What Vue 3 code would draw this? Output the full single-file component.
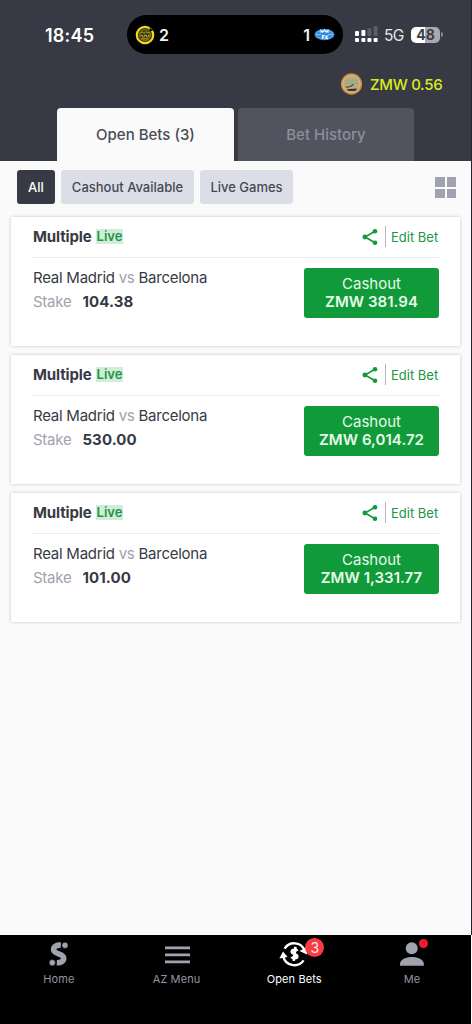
<script setup>
const bets = [
  { stake: '104.38', cashout: '381.94' },
  { stake: '530.00', cashout: '6,014.72' },
  { stake: '101.00', cashout: '1,331.77' },
]
</script>

<template>
  <div class="screen">
    <header class="header">
      <div class="status">
        <span class="time">18:45</span>
        <div class="island">
          <svg class="club" viewBox="0 0 20 20">
            <circle cx="10" cy="10" r="8.2" fill="#39360d" stroke="#f0dc16" stroke-width="2.2" />
            <circle cx="10" cy="10" r="5.4" fill="none" stroke="#8d7b32" stroke-width="1" />
            <path d="M5 8.2l2-1.4 2 1.4 2-1.6 2 1.5 2-1.3M5.2 10.3h2.3v1.6h2v-1.8h2v1.8h2v-1.6h2M6 13.8h7.4" fill="none" stroke="#b9a62c" stroke-width="1" />
            <path d="M14.8 2.4l3 3.2-3.2 1.2z" fill="#000" />
          </svg>
          <b>2</b>
          <b class="away">1</b>
          <svg class="oval" viewBox="0 0 21 13">
            <ellipse cx="10.5" cy="6.5" rx="10" ry="5.8" fill="#3488d8" />
            <ellipse cx="10.5" cy="6.5" rx="8.3" ry="4.3" fill="none" stroke="#8fc4ee" stroke-width=".7" />
            <path d="M7 4.8V2.4l1.8 1.8 1.7-2 1.7 2L14 2.4v2.4M8.5 11V7.6h2.2M8.5 9.2h1.8M11.9 7.6V11m2-3.4l-1.7 1.6 1.7 1.8" fill="none" stroke="#eef8ff" stroke-width="1.1" />
            <path d="M3 6.6h4M14 6.6h4" stroke="#b8dbf5" stroke-width=".8" />
          </svg>
        </div>
        <svg class="signal" viewBox="0 0 23 17">
          <g fill="#fff">
            <rect x="0" y="5" width="4" height="5" rx="1" /><rect x="6.4" y="4" width="4" height="6" rx="1" />
            <rect x="0" y="12" width="4" height="4" rx="1" /><rect x="6.4" y="12" width="4" height="4" rx="1" />
            <rect x="12.4" y="12" width="4" height="4" rx="1" /><rect x="18.6" y="12" width="4" height="4" rx="1" />
          </g>
          <g fill="#5b5e69"><rect x="12.4" y="2.3" width="4" height="7.7" rx="1" /><rect x="18.6" y="0" width="4" height="10" rx="1" /></g>
        </svg>
        <span class="network">5G</span>
        <div class="battery">48</div>
        <i class="cap"></i>
      </div>
      <div class="balance">
        <svg viewBox="0 0 24 24">
          <circle cx="12" cy="12" r="10.2" fill="#b5ac84" stroke="#d38b3d" stroke-width="1.8" />
          <circle cx="12" cy="12" r="9" fill="none" stroke="#efc286" stroke-width=".8" />
          <path d="M5 8h14M4.5 11h15" stroke="#93aa8c" stroke-width="1.5" />
          <path d="M7 17.4l11-.6-1.8 2.6H8.6z" fill="#393332" />
          <path d="M6 15.6l5-1.2 3-2" fill="none" stroke="#6a4a34" stroke-width="1.3" />
        </svg>
        <span>ZMW 0.56</span>
      </div>
      <div class="tabs">
        <div class="tab active"><span>Open Bets (3)</span></div>
        <div class="tab history"><span>Bet History</span></div>
      </div>
    </header>

    <main>
      <div class="filters">
        <div class="chip all">All</div>
        <div class="chip available">Cashout Available</div>
        <div class="chip games">Live Games</div>
        <div class="grid"><i></i><i></i><i></i><i></i></div>
      </div>
      <div class="cards">
        <article v-for="bet in bets" :key="bet.stake" class="card">
          <div class="card-head">
            <b class="kind">Multiple</b>
            <span class="live">Live</span>
            <svg class="share" viewBox="0 0 16 18">
              <path d="M13 3.2L3 9l10 5.8" fill="none" stroke="#119a3a" stroke-width="1.6" />
              <g fill="#119a3a"><circle cx="13" cy="3.2" r="2.3" /><circle cx="2.9" cy="9" r="2.4" /><circle cx="13" cy="14.8" r="2.3" /></g>
            </svg>
            <i class="bar"></i>
            <span class="edit">Edit Bet</span>
          </div>
          <div class="card-body">
            <div class="details">
              <div class="match">Real Madrid <em>vs</em> Barcelona</div>
              <div class="stake"><em>Stake</em><b>{{ bet.stake }}</b></div>
            </div>
            <div class="cashout">
              <span>Cashout</span>
              <b>ZMW {{ bet.cashout }}</b>
            </div>
          </div>
        </article>
      </div>
    </main>

    <nav class="nav">
      <div class="item">
        <svg viewBox="0 0 38 28">
          <path d="M20.8 5.2C16.4 4.8 13.6 6.6 13.6 9.6c0 5 10.1 3.4 10.1 8.6 0 2.9-2.8 4.7-6.9 4.5" fill="none" stroke="#a0a2b0" stroke-width="5.6" />
          <circle cx="25" cy="5.3" r="3.1" fill="#a0a2b0" stroke="#000" stroke-width=".5" /><circle cx="12.3" cy="22.7" r="3.1" fill="#a0a2b0" stroke="#000" stroke-width=".5" />
        </svg>
        <span class="home">Home</span>
      </div>
      <div class="item">
        <svg viewBox="0 0 38 28">
          <path d="M7 7.8h25M7 14.9h25M7 21.9h25" stroke="#a0a2b0" stroke-width="2.7" />
        </svg>
        <span class="menu">AZ Menu</span>
      </div>
      <div class="item selected">
        <svg viewBox="0 0 38 28">
          <path d="M9.6 8.6A11.4 11.4 0 0 1 29.5 9.8M28.6 20.4A11.4 11.4 0 0 1 8.2 16.2" fill="none" stroke="#fff" stroke-width="2.4" />
          <path d="M32 7v7.6l-7.6-3.6zM4.4 18.4l3.6-7 4.6 5.6z" fill="#fff" />
          <path d="M22.4 10.9c-1.1-1.7-5.6-1.7-5.6.8s5.4 2 5.4 4.5c0 2.6-4.3 2.6-5.8.8M20.4 6.8l-1.7 14" fill="none" stroke="#fff" stroke-width="2.7" />
        </svg>
        <i class="badge">3</i>
        <span class="open">Open Bets</span>
      </div>
      <div class="item">
        <svg viewBox="0 0 38 28">
          <circle cx="18.7" cy="8.2" r="6" fill="#a0a2b0" />
          <path d="M7 25.8v-2.2c0-4.2 6.2-6.7 11.9-6.7s11.9 2.5 11.9 6.7v2.2z" fill="#a0a2b0" />
        </svg>
        <i class="dot"></i>
        <span class="me">Me</span>
      </div>
    </nav>
    <i class="edge"></i>
  </div>
</template>

<style>
body { background: #000; }
</style>

<style scoped>
.screen {
  position: relative;
  display: flex;
  flex-direction: column;
  width: 472px;
  height: 1024px;
  overflow: hidden;
  background: #fafafb;
  color: #373a45;
  font-family: Inter, "Liberation Sans", sans-serif;
}
.screen * { box-sizing: border-box; }
.screen svg, .screen i { display: block; flex: none; }
.screen em { font-style: normal; color: #a0a2ae; }
.screen span, .screen b { white-space: nowrap; }
.header { height: 161px; background: #373a45; flex: none; }
.status { display: flex; align-items: center; height: 69px; color: #fff; }
.time { width: 82px; margin-left: 45px; padding-top: 2px; font-size: 18px; font-weight: 600; letter-spacing: .2px; }
.island { display: flex; align-items: center; width: 216px; height: 39px; padding: 0 8px 0 8px; border-radius: 20px; background: #000; }
.island b { font-size: 16px; font-weight: 600; color: #f4f4f4; }
.club { width: 20px; height: 20px; margin-right: 4px; }
.away { margin-left: auto; }
.oval { width: 21px; height: 13px; margin-left: 4px; }
.signal { width: 23px; height: 17px; margin-left: 12px; }
.network { width: 21px; margin-left: 6px; padding-top: 2px; font-size: 15.5px; letter-spacing: -.6px; color: #e6e6ea; }
.battery { width: 29px; height: 16px; margin-left: 6px; border-radius: 5px; background: linear-gradient(90deg, #fff 49%, #a8a9b0 49%); color: #3b3d47; font-size: 14px; line-height: 16px; font-weight: 700; text-align: center; }
.cap { width: 2px; height: 5px; margin-left: 1px; border-radius: 0 2px 2px 0; background: #85878f; }
.balance { display: flex; align-items: center; height: 30px; padding-left: 340px; color: #dbea1d; font-size: 15px; font-weight: 500; letter-spacing: -.3px; }
.balance svg { width: 23px; height: 24px; margin-right: 7px; }
.tabs { display: flex; gap: 4px; margin: 9px 0 0 57px; }
.tab { display: flex; align-items: center; justify-content: center; width: 177px; height: 53px; border-radius: 4px 4px 0 0; background: #51545f; color: #8c8f9b; font-size: 15px; font-weight: 500; letter-spacing: 0; }
.tab.active { background: #fafafb; color: #4a4c57; }
.tab.history { width: 176px; }
main { flex: 1; }
.filters { display: flex; height: 34px; margin: 9px 0 0 17px; }
.chip { height: 34px; margin-right: 6px; border-radius: 3px; background: #dcdee7; font-size: 13px; line-height: 34px; font-weight: 500; text-align: center; white-space: nowrap; color: #454853; }
.all { width: 38px; background: #373a45; color: #fff; }
.available { width: 133px; }
.games { width: 93px; }
.grid { display: grid; grid-template-columns: 9.5px 9.5px; grid-auto-rows: 9.5px; gap: 2px; margin: 7px 0 0 136px; }
.grid i { background: #a0a2b0; }
.cards { display: grid; gap: 9px; padding: 13px 12px 0 11px; }
.card { height: 129px; padding: 0 21px; background: #fff; box-shadow: 0 0 3px rgba(0, 0, 0, .22); }
.card-head { display: flex; align-items: center; height: 41px; padding-bottom: 1px; border-bottom: 1px solid #e9e9ee; }
.kind { width: 59px; margin-left: 1px; font-size: 15px; font-weight: 700; letter-spacing: -.15px; }
.live { width: 27px; height: 15px; margin-left: 4px; background: #d2ecd9; color: #209644; font-size: 13px; line-height: 15px; font-weight: 600; text-align: center; }
.share { width: 16px; height: 18px; margin-left: auto; }
.bar { width: 1px; height: 21px; margin: 0 5px 0 7px; background: #b5b2c4; }
.edit { width: 48px; color: #209644; font-size: 13px; }
.card-body { display: flex; justify-content: space-between; padding-top: 10px; }
.details { padding-left: 1px; font-size: 15px; letter-spacing: -.25px; }
.match { height: 20px; line-height: 20px; }
.stake { height: 24px; margin-top: 1px; line-height: 25px; }
.stake b { margin-left: 11px; font-weight: 700; letter-spacing: .1px; }
.cashout { display: flex; flex-direction: column; align-items: center; width: 135px; height: 50px; padding-top: 7px; border-radius: 3px; background: #119a39; color: #e7fbeb; font-size: 15px; line-height: 17.5px; }
.cashout b { font-weight: 600; letter-spacing: .05px; }
.nav { display: flex; width: 471px; height: 89px; background: #000; flex: none; }
.item { position: relative; display: flex; flex-direction: column; align-items: center; width: 117.7px; padding-top: 5px; color: #9294a0; font-size: 11px; line-height: 14px; letter-spacing: .1px; }
.item svg { width: 38px; height: 28px; margin-bottom: 4px; }
.selected { color: #fff; }
.badge { position: absolute; left: 70px; top: 3px; width: 19px; height: 19px; border-radius: 50%; background: #f83c44; color: #ffe7e8; font: normal 14px/19px Inter, sans-serif; letter-spacing: 0; text-align: center; }
.dot { position: absolute; left: 66px; top: 4px; width: 9px; height: 9px; border-radius: 50%; background: #ee1c2b; }
.edge { position: absolute; right: 0; top: 0; width: 1px; height: 935px; background: #24252d; }
</style>
